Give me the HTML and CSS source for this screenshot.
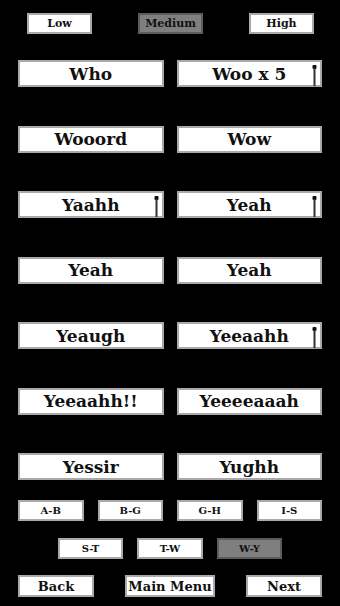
FILE: index.html
```html
<!DOCTYPE html>
<html>
<head>
<meta charset="utf-8">
<link rel="stylesheet" href="styles.css">
</head>
<body>
<div class="screen">
  <div class="levels">
    <div class="btn small">Low</div>
    <div class="btn small sel">Medium</div>
    <div class="btn small">High</div>
  </div>
  <div class="sounds">
    <div class="btn big">Who</div>
    <div class="btn big">Woo x 5<span class="pin"><svg width="5" height="21" viewBox="0 0 5 21"><rect x="0.5" y="0" width="4" height="4" rx="1" fill="#111"/><rect x="1.5" y="3" width="2" height="18" fill="#333"/></svg></span></div>
    <div class="btn big">Wooord</div>
    <div class="btn big">Wow</div>
    <div class="btn big">Yaahh<span class="pin"><svg width="5" height="21" viewBox="0 0 5 21"><rect x="0.5" y="0" width="4" height="4" rx="1" fill="#111"/><rect x="1.5" y="3" width="2" height="18" fill="#333"/></svg></span></div>
    <div class="btn big">Yeah<span class="pin"><svg width="5" height="21" viewBox="0 0 5 21"><rect x="0.5" y="0" width="4" height="4" rx="1" fill="#111"/><rect x="1.5" y="3" width="2" height="18" fill="#333"/></svg></span></div>
    <div class="btn big">Yeah</div>
    <div class="btn big">Yeah</div>
    <div class="btn big">Yeaugh</div>
    <div class="btn big">Yeeaahh<span class="pin"><svg width="5" height="21" viewBox="0 0 5 21"><rect x="0.5" y="0" width="4" height="4" rx="1" fill="#111"/><rect x="1.5" y="3" width="2" height="18" fill="#333"/></svg></span></div>
    <div class="btn big">Yeeaahh!!</div>
    <div class="btn big">Yeeeeaaah</div>
    <div class="btn big">Yessir</div>
    <div class="btn big">Yughh</div>
  </div>
  <div class="letters row1">
    <div class="btn tiny">A-B</div>
    <div class="btn tiny">B-G</div>
    <div class="btn tiny">G-H</div>
    <div class="btn tiny">I-S</div>
  </div>
  <div class="letters row2">
    <div class="btn tiny">S-T</div>
    <div class="btn tiny">T-W</div>
    <div class="btn tiny sel">W-Y</div>
  </div>
  <div class="nav">
    <div class="btn navbtn side">Back</div>
    <div class="btn navbtn mid">Main Menu</div>
    <div class="btn navbtn side">Next</div>
  </div>
</div>
</body>
</html>
```

FILE: styles.css
```css
html, body {
  margin: 0;
  padding: 0;
  background: #000;
}
.screen {
  width: 340px;
  height: 606px;
  background: #000;
  font-family: "DejaVu Serif", "Liberation Serif", serif;
  font-weight: bold;
  color: #111;
  box-sizing: border-box;
  padding-top: 13px;
}
.btn {
  background: #fff;
  border: 2px solid #a9a9a9;
  box-sizing: border-box;
  display: flex;
  align-items: center;
  justify-content: center;
  white-space: nowrap;
  position: relative;
}
.btn.sel {
  background: #7f7f7f;
  border-color: #5c5c5c;
}
.levels {
  display: flex;
  justify-content: space-between;
  padding: 0 26px 0 27px;
}
.small {
  width: 65px;
  height: 21px;
  font-size: 11px;
}
.sounds {
  display: grid;
  grid-template-columns: 1fr 1fr;
  column-gap: 13px;
  row-gap: 38.5px;
  padding: 0 18px;
  margin-top: 26px;
}
.big {
  height: 27px;
  font-size: 17px;
}
.pin {
  position: absolute;
  right: 3px;
  top: 3px;
  display: flex;
}
.letters {
  display: flex;
  gap: 14px;
  justify-content: center;
}
.row1 {
  margin-top: 20px;
}
.row2 {
  margin-top: 17px;
}
.tiny {
  width: 65.5px;
  height: 21px;
  font-size: 10px;
}
.nav {
  display: flex;
  justify-content: space-between;
  padding: 0 18px;
  margin-top: 16px;
}
.navbtn {
  height: 22px;
  font-size: 13px;
}
.side {
  width: 76px;
}
.mid {
  width: 90px;
}
```
